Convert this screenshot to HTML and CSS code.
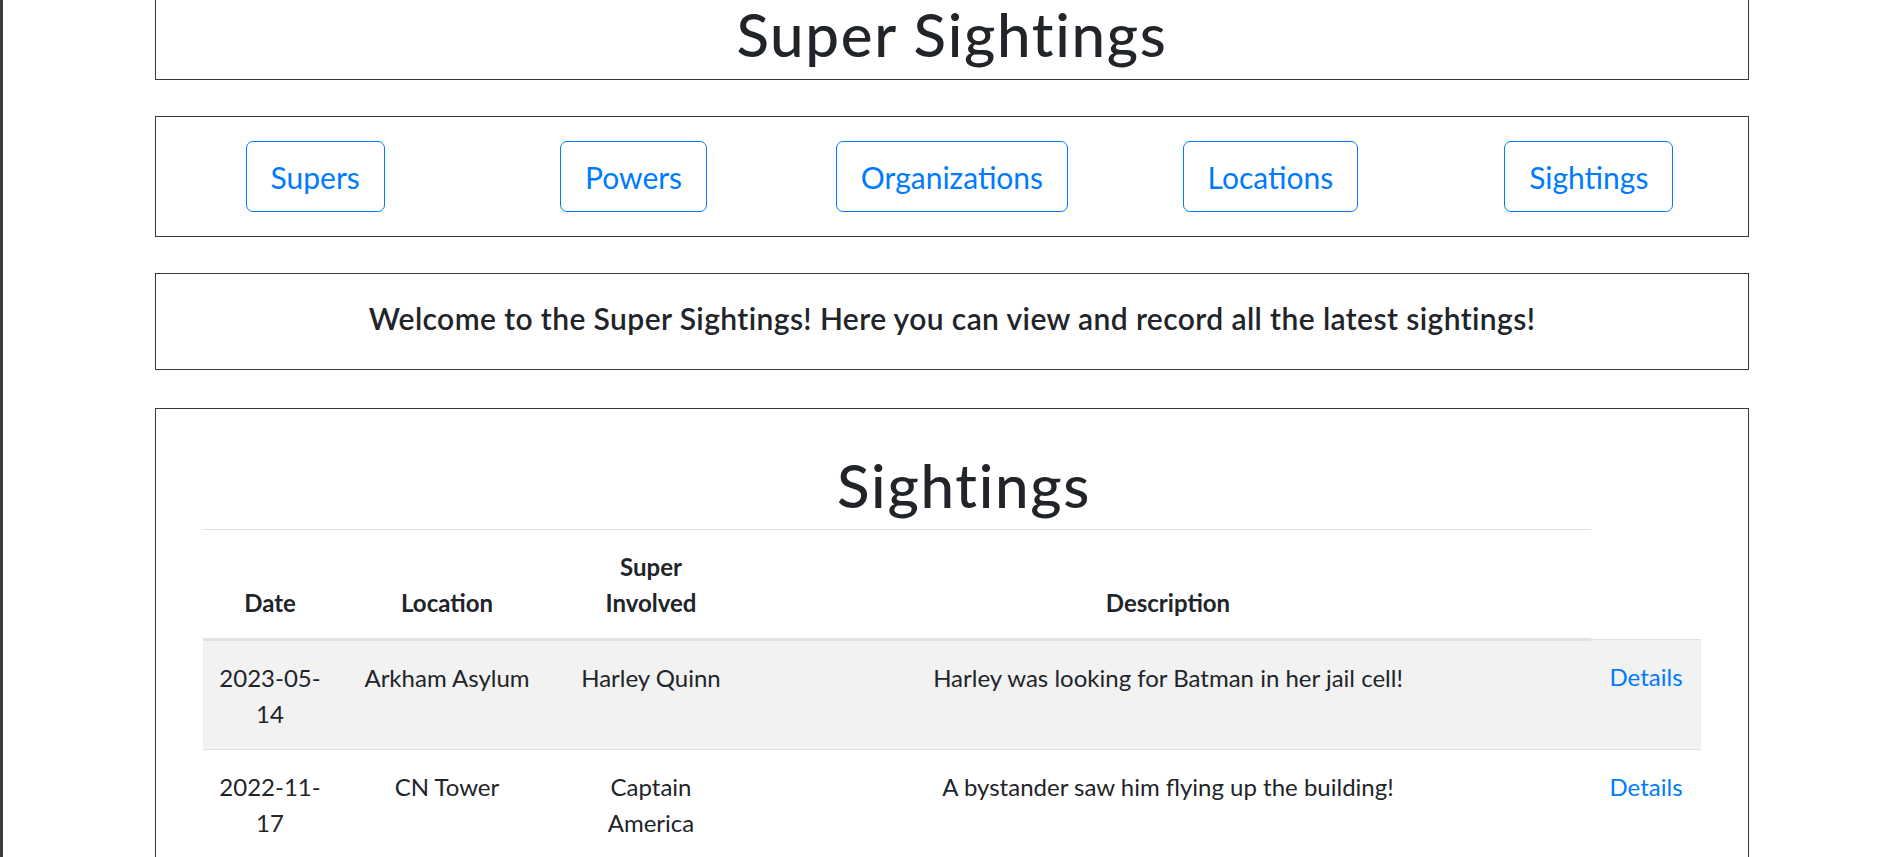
FILE: index.html
```html
<!DOCTYPE html>
<html lang="en">
<head>
<meta charset="utf-8">
<title>Super Sightings</title>
<link rel="stylesheet" href="styles.css">
</head>
<body>
<div class="page">
  <header class="box title-box">
    <h1 class="site-title">Super Sightings</h1>
  </header>

  <nav class="box nav-box">
    <div class="nav-col"><a class="btn" href="#">Supers</a></div>
    <div class="nav-col"><a class="btn" href="#">Powers</a></div>
    <div class="nav-col"><a class="btn" href="#">Organizations</a></div>
    <div class="nav-col"><a class="btn" href="#">Locations</a></div>
    <div class="nav-col"><a class="btn" href="#">Sightings</a></div>
  </nav>

  <section class="box welcome-box">
    <h5 class="welcome">Welcome to the Super Sightings! Here you can view and record all the latest sightings!</h5>
  </section>

  <section class="box sightings-box">
    <table class="sightings">
      <colgroup>
        <col class="c-date">
        <col class="c-loc">
        <col class="c-super">
        <col class="c-desc">
        <col class="c-act">
      </colgroup>
      <thead>
        <tr class="title-row">
          <th></th>
          <th colspan="3"><h1 class="table-title">Sightings</h1></th>
        </tr>
        <tr class="head-row">
          <th>Date</th>
          <th>Location</th>
          <th>Super Involved</th>
          <th>Description</th>
        </tr>
      </thead>
      <tbody>
        <tr>
          <td class="date">2023-05-14</td>
          <td>Arkham Asylum</td>
          <td>Harley Quinn</td>
          <td>Harley was looking for Batman in her jail cell!</td>
          <td><a class="details" href="#">Details</a></td>
        </tr>
        <tr>
          <td class="date">2022-11-17</td>
          <td>CN Tower</td>
          <td>Captain America</td>
          <td>A bystander saw him flying up the building!</td>
          <td><a class="details" href="#">Details</a></td>
        </tr>
      </tbody>
    </table>
  </section>
</div>
</body>
</html>
```

FILE: styles.css
```css
html, body {
  margin: 0;
  padding: 0;
}

body {
  border-left: 3px solid #3a3d40;
  min-height: 100vh;
  box-sizing: border-box;
  background: #ffffff;
  color: #212529;
  font-family: Lato, "Segoe UI", "Noto Sans", sans-serif;
  font-size: 24px;
  line-height: 1.5;
  overflow: hidden;
}

.page {
  width: 1594px;
  margin-left: 152px;
}

.box {
  border: 1px solid #343a40;
  margin-bottom: 36px;
}

/* Title */
.title-box {
  margin-top: -3px;
  text-align: center;
}

.site-title {
  font-size: 60px;
  line-height: 72px;
  font-weight: 500;
  letter-spacing: 1.7px;
  margin: 0 0 9px;
}

/* Navigation */
.nav-box {
  display: grid;
  grid-template-columns: repeat(5, 1fr);
  padding: 24px 0;
}

.nav-col {
  display: flex;
  justify-content: center;
}

.btn {
  display: inline-block;
  font-size: 30px;
  line-height: 45px;
  padding: 13px 24px 11px;
  border: 1px solid #007bff;
  border-radius: 7px;
  color: #007bff;
  text-decoration: none;
}

/* Welcome */
.welcome-box {
  padding: 26px 0 21px;
  text-align: center;
  margin-bottom: 38px;
}

.welcome {
  font-size: 30px;
  line-height: 36px;
  font-weight: 600;
  letter-spacing: 0.4px;
  margin: 0 0 12px;
}

/* Sightings table */
.sightings-box {
  padding: 20px 47px 36px;
  margin-bottom: 0;
}

.sightings {
  width: 100%;
  border-collapse: collapse;
  table-layout: fixed;
  text-align: center;
}

.c-date { width: 134px; }
.c-loc { width: 220px; }
.c-super { width: 188px; }
.c-desc { width: 846px; }
.c-act { width: 110px; }

.sightings th,
.sightings td {
  padding: 19px 18px 17px;
  vertical-align: top;
}

.title-row th {
  padding: 20px 18px 8px;
  border-bottom: 1px solid #dee2e6;
}

.table-title {
  font-size: 60px;
  line-height: 72px;
  font-weight: 500;
  letter-spacing: 1.7px;
  margin: 0;
}

.head-row th {
  vertical-align: bottom;
  font-weight: 700;
  border-bottom: 3px solid #dee2e6;
}

.sightings tbody td {
  border-top: 1px solid #dee2e6;
}

.sightings tbody tr:nth-child(odd) {
  background: #f2f2f2;
}

.sightings td.date {
  padding-left: 8px;
  padding-right: 8px;
}

.details {
  color: #007bff;
  text-decoration: none;
}
```
